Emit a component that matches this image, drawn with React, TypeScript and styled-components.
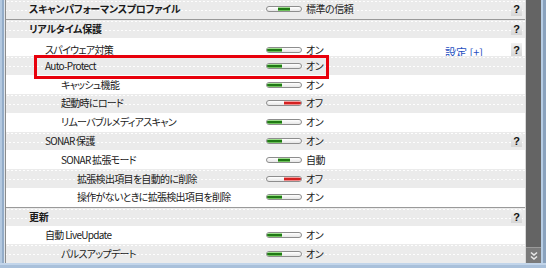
import React from "react";
import styled, { createGlobalStyle, css } from "styled-components";

const Global = createGlobalStyle`
  html, body { margin: 0; padding: 0; background: #ffffff; }
  body { width: 546px; height: 268px; overflow: hidden; }
  #root { width: 546px; height: 268px; }
`;

type ToggleState = "on" | "off" | "mid";

interface RowData {
  label: string;
  level: 0 | 1 | 2 | 3;
  header?: boolean;
  toggle?: ToggleState;
  value?: string;
  link?: string;
  help?: boolean;
  highlight?: boolean;
}

const rows: RowData[] = [
  { label: "スキャンパフォーマンスプロファイル", level: 0, header: true, toggle: "mid", value: "標準の信頼", help: true },
  { label: "リアルタイム保護", level: 0, header: true, help: true },
  { label: "スパイウェア対策", level: 1, toggle: "on", value: "オン", link: "設定 [+]", help: true },
  { label: "Auto-Protect", level: 1, toggle: "on", value: "オン", highlight: true },
  { label: "キャッシュ機能", level: 2, toggle: "on", value: "オン" },
  { label: "起動時にロード", level: 2, toggle: "off", value: "オフ" },
  { label: "リムーバブルメディアスキャン", level: 2, toggle: "on", value: "オン" },
  { label: "SONAR 保護", level: 1, toggle: "on", value: "オン", help: true },
  { label: "SONAR 拡張モード", level: 2, toggle: "mid", value: "自動" },
  { label: "拡張検出項目を自動的に削除", level: 3, toggle: "off", value: "オフ" },
  { label: "操作がないときに拡張検出項目を削除", level: 3, toggle: "on", value: "オン" },
  { label: "更新", level: 0, header: true, help: true },
  { label: "自動 LiveUpdate", level: 1, toggle: "on", value: "オン" },
  { label: "パルスアップデート", level: 2, toggle: "on", value: "オン" },
];

const Frame = styled.div`
  width: 546px;
  height: 268px;
  display: flex;
  flex-direction: column;
  font-family: "Noto Sans CJK JP", "Liberation Sans", sans-serif;
  font-feature-settings: "palt";
  color: #1a1a1a;
`;

const Body = styled.div`
  flex: 1;
  display: flex;
  min-height: 0;
`;

const LeftEdge = styled.div`
  width: 6px;
  background: linear-gradient(
    to right,
    #b4c9e0 0 2px,
    #93acc8 2px 4px,
    #dfe5ec 4px 5px,
    #8c8c8c 5px 6px
  );
`;

const List = styled.div`
  flex: 1;
  display: flex;
  flex-direction: column;
  overflow: hidden;
  border-right: 1px solid #d8d8d8;
`;

const Row = styled.div<{ $grey: boolean; $sep: boolean }>`
  position: relative;
  box-sizing: border-box;
  height: 18.8px;
  flex: 0 0 18.8px;
  display: grid;
  grid-template-columns: 260px 179px 1fr 18px;
  align-items: center;
  background-color: ${(p) => (p.$grey ? "#ebebeb" : "#ffffff")};
  ${(p) =>
    p.$grey &&
    css`
      background-image: radial-gradient(circle, rgba(255, 255, 255, 0.95) 0.55px, transparent 0.9px),
        radial-gradient(circle, rgba(255, 255, 255, 0.95) 0.55px, transparent 0.9px);
      background-size: 4px 19px, 4px 19px;
      background-position: 0 -8px, 2px 1px;
      background-repeat: repeat-x;
    `}
  ${(p) => p.$sep && css`border-top: 1px solid #9a9a9a;`}
`;

const Label = styled.div<{ $level: number; $header: boolean }>`
  padding-left: ${(p) => 23 + p.$level * 16}px;
  font-size: 10px;
  letter-spacing: ${(p) => (p.$header ? "-0.25px" : "-0.7px")};
  font-weight: ${(p) => (p.$header ? 700 : 400)};
  white-space: nowrap;
  line-height: 1;
`;

const Control = styled.div`
  display: flex;
  align-items: center;
  gap: 4px;
  font-size: 10px;
  letter-spacing: -0.5px;
  line-height: 1;
  white-space: nowrap;
`;

const Capsule = styled.div`
  position: relative;
  box-sizing: border-box;
  width: 36px;
  height: 6px;
  border: 1px solid #8d8d8d;
  border-radius: 3px;
  background: linear-gradient(#ffffff, #e6e6e6);
  overflow: hidden;
`;

const Segment = styled.div<{ $state: ToggleState }>`
  position: absolute;
  top: 0;
  bottom: 0;
  ${(p) =>
    p.$state === "on"
      ? css`left: 0; width: 15px;`
      : p.$state === "off"
      ? css`right: 0; width: 17px;`
      : css`left: 11px; width: 12px;`}
  background: ${(p) =>
    p.$state === "off"
      ? "linear-gradient(#f6a0a0 0 1px, #d42020 1px 3px, #f08a8a 3px)"
      : "linear-gradient(#9fe08e 0 1px, #1f7a14 1px 3px, #6fc25c 3px)"};
`;

const LinkText = styled.a`
  font-size: 11px;
  line-height: 1;
  color: #1f4fbf;
  text-decoration: underline;
  white-space: nowrap;
`;

const HelpCell = styled.div`
  display: flex;
  justify-content: flex-end;
`;

const Help = styled.div`
  margin-right: 3px;
  width: 11px;
  height: 13px;
  display: flex;
  align-items: center;
  justify-content: center;
  background: linear-gradient(#f2f2f2, #d6d6d6);
  font-family: "Liberation Sans", Arial, sans-serif;
  font-size: 11px;
  font-weight: 700;
  color: #111;
`;

const Highlight = styled.div`
  position: absolute;
  z-index: 2;
  left: 28px;
  top: -1.5px;
  width: 295px;
  height: 24px;
  box-sizing: border-box;
  border: 3px solid #e8000b;
  pointer-events: none;
`;

const Scrollbar = styled.div`
  width: 15px;
  display: flex;
  flex-direction: column;
  justify-content: flex-end;
  background: #646464;
`;

const ScrollButton = styled.div`
  height: 16px;
  box-sizing: border-box;
  border-top: 1px solid #9a9a9a;
  display: flex;
  align-items: center;
  justify-content: center;
  background: #7a7a7a;
`;

const RightEdge = styled.div`
  width: 5px;
  background: linear-gradient(to right, #b7cde4 0 2px, #8aa2bd 2px 5px);
`;

const BottomEdge = styled.div`
  height: 5px;
  background: linear-gradient(#c2d5ea 0 2px, #a9c0da 2px 5px);
`;

const Toggle: React.FC<{ state: ToggleState }> = ({ state }) => (
  <Capsule>
    <Segment $state={state} />
  </Capsule>
);

export default function App() {
  return (
    <>
      <Global />
      <Frame>
        <Body>
          <LeftEdge />
          <List>
            {rows.map((r, i) => (
              <Row key={i} $grey={r.header || i % 2 === 1} $sep={r.header === true && i > 0}>
                <Label $level={r.level} $header={!!r.header}>
                  {r.label}
                </Label>
                <Control>
                  {r.toggle && <Toggle state={r.toggle} />}
                  {r.value && <span>{r.value}</span>}
                </Control>
                <div>{r.link && <LinkText>{r.link}</LinkText>}</div>
                <HelpCell>{r.help && <Help>?</Help>}</HelpCell>
                {r.highlight && <Highlight />}
              </Row>
            ))}
          </List>
          <Scrollbar>
            <ScrollButton>
              <svg width="10" height="10" viewBox="0 0 10 10">
                <path d="M2 1.5 L5 4 L8 1.5 M2 5.5 L5 8 L8 5.5" stroke="#e8e8e8" strokeWidth="1.6" fill="none" />
              </svg>
            </ScrollButton>
          </Scrollbar>
          <RightEdge />
        </Body>
        <BottomEdge />
      </Frame>
    </>
  );
}
